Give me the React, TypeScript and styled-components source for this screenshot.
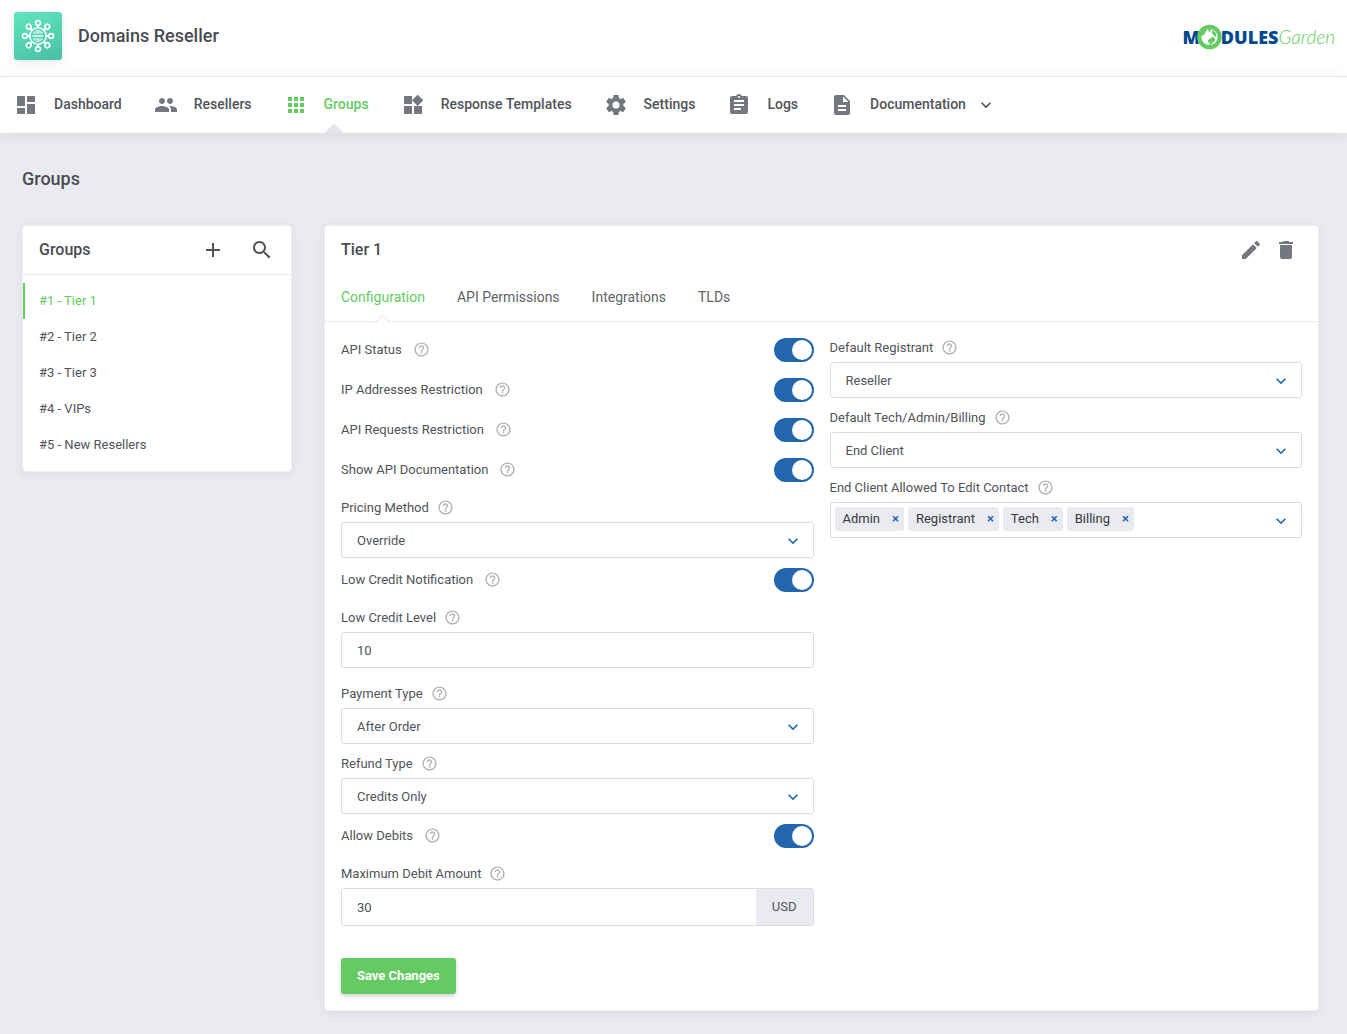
import React, { useState } from "react";
import styled, { createGlobalStyle, css } from "styled-components";

const color = {
  page: "#e9ebf0",
  line: "#e9ebf0",
  border: "#d9dbe8",
  text: "#505459",
  heading: "#484b50",
  icon: "#747780",
  green: "#63cb61",
  blue: "#2267ae",
  help: "#b0b2b7",
};

const Global = createGlobalStyle`
  *, *::before, *::after { box-sizing: border-box; }
  body {
    margin: 0;
    background: ${color.page};
    color: ${color.text};
    font: 400 13px/20px Roboto, "Open Sans", sans-serif;
  }
  button, input, select { font: inherit; color: inherit; margin: 0; }
  h1, h2, h3 { margin: 0; font-weight: 500; }
  ul { margin: 0; padding: 0; list-style: none; }
  a { color: inherit; text-decoration: none; }
`;

const paths = {
  dashboard: "M13 3v6h8V3h-8zM13 21h8V11h-8v10zM3 21h8v-6H3v6zM3 13h8V3H3v10z",
  people:
    "M16 11c1.66 0 2.99-1.34 2.99-3S17.66 5 16 5c-1.66 0-3 1.34-3 3s1.34 3 3 3zm-8 0c1.66 0 2.99-1.34 2.99-3S9.66 5 8 5C6.34 5 5 6.34 5 8s1.34 3 3 3zm0 2c-2.33 0-7 1.17-7 3.5V19h14v-2.5c0-2.33-4.67-3.5-7-3.5zm8 0c-.29 0-.62.02-.97.05 1.16.84 1.97 1.97 1.97 3.45V19h6v-2.5c0-2.33-4.67-3.5-7-3.5z",
  apps: "M4 8h4V4H4v4zm6 12h4v-4h-4v4zm-6 0h4v-4H4v4zm0-6h4v-4H4v4zm6 0h4v-4h-4v4zm6-10v4h4V4h-4zm-6 4h4V4h-4v4zm6 6h4v-4h-4v4zm0 6h4v-4h-4v4z",
  widgets: "M13 13v8h8v-8h-8zM3 21h8v-8H3v8zM3 3v8h8V3H3zm13.66-1.31L11 7.34 16.66 13l5.66-5.66-5.66-5.65z",
  settings:
    "M12,15.5A3.5,3.5 0 0,1 8.5,12A3.5,3.5 0 0,1 12,8.5A3.5,3.5 0 0,1 15.5,12A3.5,3.5 0 0,1 12,15.5M19.43,12.97C19.47,12.65 19.5,12.33 19.5,12C19.5,11.67 19.47,11.34 19.43,11L21.54,9.37C21.73,9.22 21.78,8.95 21.66,8.73L19.66,5.27C19.54,5.05 19.27,4.96 19.05,5.05L16.56,6.05C16.04,5.66 15.5,5.32 14.87,5.07L14.5,2.42C14.46,2.18 14.25,2 14,2H10C9.75,2 9.54,2.18 9.5,2.42L9.13,5.07C8.5,5.32 7.96,5.66 7.44,6.05L4.95,5.05C4.73,4.96 4.46,5.05 4.34,5.27L2.34,8.73C2.21,8.95 2.27,9.22 2.46,9.37L4.57,11C4.53,11.34 4.5,11.67 4.5,12C4.5,12.33 4.53,12.65 4.57,12.97L2.46,14.63C2.27,14.78 2.21,15.05 2.34,15.27L4.34,18.73C4.46,18.95 4.73,19.03 4.95,18.95L7.44,17.94C7.96,18.34 8.5,18.68 9.13,18.93L9.5,21.58C9.54,21.82 9.75,22 10,22H14C14.25,22 14.46,21.82 14.5,21.58L14.87,18.93C15.5,18.67 16.04,18.34 16.56,17.94L19.05,18.95C19.27,19.03 19.54,18.95 19.66,18.73L21.66,15.27C21.78,15.05 21.73,14.78 21.54,14.63L19.43,12.97Z",
  clipboard:
    "M17,9H7V7H17M17,13H7V11H17M14,17H7V15H14M12,3A1,1 0 0,1 13,4A1,1 0 0,1 12,5A1,1 0 0,1 11,4A1,1 0 0,1 12,3M19,3H14.82C14.4,1.84 13.3,1 12,1C10.7,1 9.6,1.84 9.18,3H5A2,2 0 0,0 3,5V19A2,2 0 0,0 5,21H19A2,2 0 0,0 21,19V5A2,2 0 0,0 19,3Z",
  document:
    "M14 2H6c-1.1 0-1.99.9-1.99 2L4 20c0 1.1.89 2 1.99 2H18c1.1 0 2-.9 2-2V8l-6-6zm2 16H8v-2h8v2zm0-4H8v-2h8v2zm-3-5V3.5L18.5 9H13z",
  chevron: "M7.41 8.58 12 13.17l4.59-4.59L18 10l-6 6-6-6 1.41-1.42z",
  plus: "M19 13h-6v6h-2v-6H5v-2h6V5h2v6h6v2z",
  search:
    "M15.5 14h-.79l-.28-.27C15.41 12.59 16 11.11 16 9.5 16 5.91 13.09 3 9.5 3S3 5.91 3 9.5 5.91 16 9.5 16c1.61 0 3.09-.59 4.23-1.57l.27.28v.79l5 4.99L20.49 19l-4.99-5zm-6 0C7.01 14 5 11.99 5 9.5S7.01 5 9.5 5 14 7.01 14 9.5 11.99 14 9.5 14z",
  pencil:
    "M20.71,7.04C21.1,6.65 21.1,6 20.71,5.63L18.37,3.29C18,2.9 17.35,2.9 16.96,3.29L15.12,5.12L18.87,8.87M3,17.25V21H6.75L17.81,9.93L14.06,6.18L3,17.25Z",
  trash: "M19,4H15.5L14.5,3H9.5L8.5,4H5V6H19M6,19A2,2 0 0,0 8,21H16A2,2 0 0,0 18,19V7H6V19Z",
  help: "M11 18h2v-2h-2v2zm1-16C6.48 2 2 6.48 2 12s4.48 10 10 10 10-4.48 10-10S17.52 2 12 2zm0 18c-4.41 0-8-3.59-8-8s3.59-8 8-8 8 3.59 8 8-3.59 8-8 8zm0-14c-2.21 0-4 1.79-4 4h2c0-1.1.9-2 2-2s2 .9 2 2c0 2-3 1.75-3 5h2c0-2.25 3-2.5 3-5 0-2.21-1.79-4-4-4z",
};
type IconName = keyof typeof paths;

const Svg = styled.svg<{ $size: number }>`
  display: block;
  flex: none;
  width: ${(p) => p.$size}px;
  height: ${(p) => p.$size}px;
  fill: currentColor;
`;

const Icon = ({ name, size = 24 }: { name: IconName; size?: number }) => (
  <Svg viewBox="0 0 24 24" $size={size} aria-hidden="true">
    <path d={paths[name]} fillRule="evenodd" />
  </Svg>
);

/* ---------- top bar ---------- */

const TopBar = styled.header`
  display: flex;
  align-items: center;
  justify-content: space-between;
  padding: 12px 12px 16px 14px;
  background: #fff;
  border-bottom: 1px solid #eeeff2;
`;

const Product = styled.div`
  display: flex;
  align-items: center;
  gap: 16px;
`;

const ProductTile = styled.div`
  display: grid;
  place-items: center;
  width: 48px;
  height: 48px;
  border-radius: 3px;
  background: linear-gradient(160deg, #5fe6bd, #49bfa6);
  box-shadow: 0 2px 8px rgba(60, 70, 90, 0.14);
`;

const ProductName = styled.h1`
  font-size: 18px;
  line-height: 24px;
  color: ${color.heading};
`;

const Brand = styled.a`
  display: flex;
  align-items: center;
  padding-top: 2px;
  color: #00498f;
  font: 800 18px/26px "Open Sans", sans-serif;

  svg {
    margin: 0 -1px 0 -3px;
  }
`;

const BrandLight = styled.span`
  color: ${color.green};
  font: italic 300 19px/26px Lato, sans-serif;
`;

const satellites = Array.from({ length: 8 }, (_, i) => i * 45);

const ProductGlyph = () => (
  <svg width="34" height="34" viewBox="-17 -17 34 34" fill="none" stroke="#fff" strokeWidth="1.6" aria-hidden="true">
    <circle r="8.2" />
    <path d="M-4.500 -3a5.400 5.400 0 0 1 9 0zM-4.500 3a5.400 5.400 0 0 0 9 0zM0 -5.400v2.400M0 5.400v-2.400" strokeWidth="0.9" />
    <path
      d="M-5.400 -1l.9 2 .9-2 .9 2 .9-2 .9 2 .9-2 .9 2 .9-2 .9 2 .9-2 .9 2 .9-2"
      strokeWidth="0.9"
    />
    {satellites.map((deg) => (
      <g key={deg} transform={`rotate(${deg})`}>
        <path d="M0 -8.200v-2.300" strokeWidth="2" />
        <circle cy="-13.1" r="2.4" />
      </g>
    ))}
  </svg>
);

const Globe = () => (
  <svg width="25" height="26" viewBox="0 0 25 26" aria-hidden="true">
    <circle cx="12.5" cy="13" r="10.2" fill="#fff" stroke={color.green} strokeWidth="4.2" />
    <path
      fill={color.green}
      d="M4 10l2-4 4-1-1 3-1 1-1 2-3 1zM11 5h3l-1 3-1 0zM15 6l4 3 0 4-2-1-1-2-1 0zM11 16l2-1 2-2 3 1 0 3-2 1-1 2-3 1 1-2-2-1z"
    />
  </svg>
);

/* ---------- navigation ---------- */

const Nav = styled.nav`
  position: relative;
  background: #fff;
  box-shadow: 0 2px 14px rgba(60, 65, 85, 0.1);
`;

const NavList = styled.ul`
  display: flex;
  gap: 16px;
  padding: 0 14px;
`;

const NavLink = styled.a<{ $active?: boolean }>`
  position: relative;
  display: flex;
  align-items: center;
  gap: 16px;
  height: 56px;
  padding-right: 16px;
  overflow: hidden;
  font-size: 14px;
  font-weight: 500;
  color: ${(p) => (p.$active ? color.green : color.text)};

  > svg {
    color: ${(p) => (p.$active ? color.green : color.icon)};
  }

  ${(p) =>
    p.$active &&
    css`
      &::after {
        content: "";
        position: absolute;
        left: 50%;
        bottom: -7px;
        width: 14px;
        height: 14px;
        margin-left: -7px;
        border-radius: 2px;
        background: #e4e6eb;
        transform: rotate(45deg);
      }
    `}
`;

const NavCaption = styled.span`
  display: flex;
  align-items: center;
  gap: 10px;
  padding-bottom: 2px;

  svg {
    margin-top: 2px;
  }
`;

const navItems: { label: string; icon: IconName; active?: boolean; menu?: boolean }[] = [
  { label: "Dashboard", icon: "dashboard" },
  { label: "Resellers", icon: "people" },
  { label: "Groups", icon: "apps", active: true },
  { label: "Response Templates", icon: "widgets" },
  { label: "Settings", icon: "settings" },
  { label: "Logs", icon: "clipboard" },
  { label: "Documentation", icon: "document", menu: true },
];

/* ---------- page ---------- */

const Main = styled.main`
  padding: 32px 28px 20px 22px;
`;

const PageTitle = styled.h2`
  margin-bottom: 32px;
  font-size: 18px;
  line-height: 28px;
  color: ${color.heading};
`;

const Columns = styled.div`
  display: grid;
  grid-template-columns: 270px minmax(0, 1fr);
  align-items: start;
  gap: 32px;
`;

const Card = styled.section`
  background: #fff;
  background-clip: padding-box;
  border: 1px solid #eeeff4;
  border-radius: 4px;
  box-shadow: 0 2px 10px rgba(60, 65, 85, 0.08);
`;

const CardHeader = styled.div<{ $ruled?: boolean }>`
  display: flex;
  align-items: center;
  justify-content: space-between;
  height: ${(p) => (p.$ruled ? 49 : 48)}px;
  padding: 0 16px;
  border-bottom: ${(p) => (p.$ruled ? `1px solid ${color.line}` : "none")};
`;

const CardTitle = styled.h3`
  font-size: 16px;
  line-height: 24px;
  color: ${color.heading};
`;

const Actions = styled.div<{ $gap: number; $inset: number; $color: string }>`
  display: flex;
  gap: ${(p) => p.$gap}px;
  padding-right: ${(p) => p.$inset}px;
  color: ${(p) => p.$color};
`;

const IconButton = styled.button`
  display: grid;
  place-items: center;
  padding: 0;
  border: 0;
  background: none;
  cursor: pointer;
`;

const GroupList = styled.ul`
  padding: 8px 0;
`;

const GroupLink = styled.a<{ $active?: boolean }>`
  display: block;
  padding: 0 16px 0 14px;
  border-left: 2px solid ${(p) => (p.$active ? color.green : "transparent")};
  line-height: 36px;
  color: ${(p) => (p.$active ? color.green : color.text)};
`;

const Tabs = styled.div`
  display: flex;
  align-items: stretch;
  gap: 32px;
  height: 48px;
  padding: 0 16px;
  border-bottom: 1px solid ${color.line};
`;

const Tab = styled.button<{ $active?: boolean }>`
  position: relative;
  padding: 0 0 2px;
  border: 0;
  background: none;
  font-size: 14px;
  color: ${(p) => (p.$active ? color.green : "#606469")};
  cursor: pointer;

  ${(p) =>
    p.$active &&
    css`
      &::after {
        content: "";
        position: absolute;
        left: 50%;
        bottom: -7px;
        width: 11px;
        height: 11px;
        margin-left: -6px;
        border: solid #e4e6f0;
        border-width: 1px 0 0 1px;
        background: #fff;
        transform: rotate(45deg);
      }
    `}
`;

const FormArea = styled.form`
  padding: 16px;
`;

const FormGrid = styled.div`
  display: grid;
  grid-template-columns: repeat(2, minmax(0, 1fr));
  align-items: start;
  gap: 16px;
`;

const ToggleRow = styled.div`
  display: flex;
  align-items: center;
  justify-content: space-between;
  height: 24px;
  margin-bottom: 16px;
`;

const LabelLine = styled.div<{ $gap: number }>`
  display: flex;
  align-items: center;
  gap: ${(p) => p.$gap}px;
  height: 20px;

  svg {
    margin-bottom: 1px;
    color: ${color.help};
  }
`;

const Switch = styled.input.attrs({ type: "checkbox", role: "switch" })`
  appearance: none;
  width: 40px;
  height: 24px;
  padding: 2px;
  border-radius: 12px;
  background: #c9ccd3;
  cursor: pointer;

  &::before {
    content: "";
    display: block;
    width: 20px;
    height: 20px;
    border-radius: 50%;
    background: #fff;
  }

  &:checked {
    background: ${color.blue};
  }

  &:checked::before {
    margin-left: 16px;
  }
`;

const FieldBox = styled.div<{ $after: number }>`
  display: grid;
  gap: 4px;
  margin-bottom: ${(p) => p.$after}px;
`;

const boxed = css`
  width: 100%;
  height: 36px;
  border: 1px solid ${color.border};
  border-radius: 3px;
  background: #fff;
`;

const TextInput = styled.input`
  ${boxed}
  padding: 0 15px;
`;

const SelectWrap = styled.div`
  display: grid;
  align-items: center;

  > * {
    grid-area: 1 / 1;
  }

  > svg {
    justify-self: end;
    margin: 2px 11px 0 0;
    color: #1e6bb0;
    pointer-events: none;
  }
`;

const SelectBox = styled.select`
  ${boxed}
  appearance: none;
  padding: 2px 40px 0 15px;
`;

const ChipBox = styled.div`
  ${boxed}
  display: flex;
  align-items: flex-start;
  gap: 4px;
  padding: 4px 40px 4px 4px;
`;

const Chip = styled.span`
  display: flex;
  align-items: center;
  justify-content: space-between;
  gap: 12px;
  height: 24px;
  padding: 0 5px 0 8px;
  border-radius: 3px;
  background: ${color.page};
  color: #36393e;
`;

const ChipRemove = styled.button`
  padding: 0;
  border: 0;
  background: none;
  color: ${color.blue};
  font-size: 13px;
  font-weight: 700;
  line-height: 24px;
  cursor: pointer;
`;

const AddonGroup = styled.div`
  ${boxed}
  display: flex;
  height: 38px;
  overflow: hidden;
`;

const AddonInput = styled.input`
  flex: 1;
  min-width: 0;
  padding: 2px 15px 0;
  border: 0;
  background: #fff;
`;

const Addon = styled.span`
  padding: 0 16px;
  background: ${color.page};
  line-height: 36px;
`;

const SaveButton = styled.button`
  height: 36px;
  margin-top: 32px;
  padding: 0 16px;
  border: 0;
  border-radius: 3px;
  background: ${color.green};
  box-shadow: 0 2px 4px rgba(50, 60, 70, 0.24);
  color: #fff;
  font-weight: 700;
  cursor: pointer;
`;

const Label = ({ id, text, gap = 8 }: { id: string; text: string; gap?: number }) => (
  <LabelLine $gap={gap}>
    <label htmlFor={id}>{text}</label>
    <Icon name="help" size={17} />
  </LabelLine>
);

const Toggle = ({ id, text }: { id: string; text: string }) => (
  <ToggleRow>
    <Label id={id} text={text} gap={11} />
    <Switch id={id} defaultChecked />
  </ToggleRow>
);

const Select = ({ id, text, options }: { id: string; text: string; options: string[] }) => (
  <FieldBox $after={10}>
    <Label id={id} text={text} />
    <SelectWrap>
      <SelectBox id={id}>
        {options.map((o) => (
          <option key={o}>{o}</option>
        ))}
      </SelectBox>
      <Icon name="chevron" size={20} />
    </SelectWrap>
  </FieldBox>
);

const groups = ["#1 - Tier 1", "#2 - Tier 2", "#3 - Tier 3", "#4 - VIPs", "#5 - New Resellers"];
const tabs = ["Configuration", "API Permissions", "Integrations", "TLDs"];

export default function App() {
  const [tab, setTab] = useState(tabs[0]);
  const [contacts, setContacts] = useState(["Admin", "Registrant", "Tech", "Billing"]);

  return (
    <>
      <Global />
      <TopBar>
        <Product>
          <ProductTile>
            <ProductGlyph />
          </ProductTile>
          <ProductName>Domains Reseller</ProductName>
        </Product>
        <Brand href="#" aria-label="ModulesGarden">
          M<Globe />DULES<BrandLight>Garden</BrandLight>
        </Brand>
      </TopBar>
      <Nav>
        <NavList>
          {navItems.map((item) => (
            <li key={item.label}>
              <NavLink href="#" $active={item.active}>
                <Icon name={item.icon} />
                <NavCaption>
                  {item.label}
                  {item.menu && <Icon name="chevron" size={20} />}
                </NavCaption>
              </NavLink>
            </li>
          ))}
        </NavList>
      </Nav>
      <Main>
        <PageTitle>Groups</PageTitle>
        <Columns>
          <Card>
            <CardHeader $ruled>
              <CardTitle>Groups</CardTitle>
              <Actions $gap={25} $inset={1} $color={color.text}>
                <IconButton aria-label="Add group">
                  <Icon name="plus" />
                </IconButton>
                <IconButton aria-label="Search groups">
                  <Icon name="search" />
                </IconButton>
              </Actions>
            </CardHeader>
            <GroupList>
              {groups.map((g, i) => (
                <li key={g}>
                  <GroupLink href="#" $active={i === 0}>
                    {g}
                  </GroupLink>
                </li>
              ))}
            </GroupList>
          </Card>
          <Card>
            <CardHeader>
              <CardTitle>Tier 1</CardTitle>
              <Actions $gap={11} $inset={4} $color={color.icon}>
                <IconButton aria-label="Edit group">
                  <Icon name="pencil" />
                </IconButton>
                <IconButton aria-label="Delete group">
                  <Icon name="trash" />
                </IconButton>
              </Actions>
            </CardHeader>
            <Tabs role="tablist">
              {tabs.map((t) => (
                <Tab key={t} role="tab" aria-selected={t === tab} $active={t === tab} onClick={() => setTab(t)}>
                  {t}
                </Tab>
              ))}
            </Tabs>
            <FormArea onSubmit={(e) => e.preventDefault()}>
              <FormGrid>
                <div>
                  <Toggle id="api-status" text="API Status" />
                  <Toggle id="ip-restriction" text="IP Addresses Restriction" />
                  <Toggle id="request-restriction" text="API Requests Restriction" />
                  <Toggle id="show-docs" text="Show API Documentation" />
                  <Select id="pricing" text="Pricing Method" options={["Override"]} />
                  <Toggle id="low-credit" text="Low Credit Notification" />
                  <FieldBox $after={16}>
                    <Label id="low-level" text="Low Credit Level" />
                    <TextInput id="low-level" defaultValue="10" />
                  </FieldBox>
                  <Select id="payment" text="Payment Type" options={["After Order"]} />
                  <Select id="refund" text="Refund Type" options={["Credits Only"]} />
                  <Toggle id="debits" text="Allow Debits" />
                  <FieldBox $after={0}>
                    <Label id="max-debit" text="Maximum Debit Amount" />
                    <AddonGroup>
                      <AddonInput id="max-debit" defaultValue="30" />
                      <Addon>USD</Addon>
                    </AddonGroup>
                  </FieldBox>
                </div>
                <div>
                  <Select id="registrant" text="Default Registrant" options={["Reseller", "End Client"]} />
                  <Select id="tech" text="Default Tech/Admin/Billing" options={["End Client", "Reseller"]} />
                  <FieldBox $after={10}>
                    <LabelLine $gap={8}>
                      <span id="contacts-label">End Client Allowed To Edit Contact</span>
                      <Icon name="help" size={17} />
                    </LabelLine>
                    <SelectWrap>
                      <ChipBox role="group" aria-labelledby="contacts-label">
                        {contacts.map((c) => (
                          <Chip key={c}>
                            {c}
                            <ChipRemove
                              type="button"
                              aria-label={`Remove ${c}`}
                              onClick={() => setContacts(contacts.filter((x) => x !== c))}
                            >
                              ×
                            </ChipRemove>
                          </Chip>
                        ))}
                      </ChipBox>
                      <Icon name="chevron" size={20} />
                    </SelectWrap>
                  </FieldBox>
                </div>
              </FormGrid>
              <SaveButton type="submit">Save Changes</SaveButton>
            </FormArea>
          </Card>
        </Columns>
      </Main>
    </>
  );
}
